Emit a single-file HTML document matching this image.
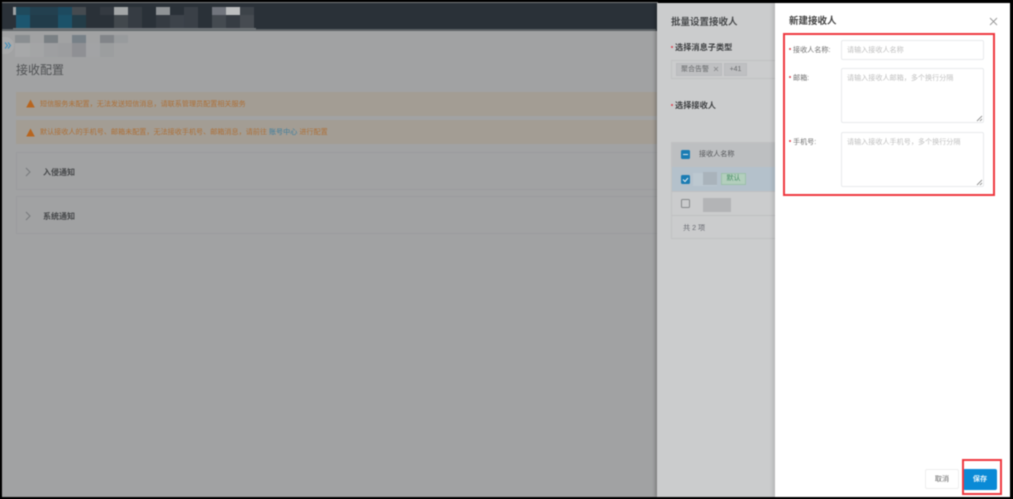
<!DOCTYPE html>
<html lang="zh">
<head>
<meta charset="utf-8">
<style>
html,body{margin:0;padding:0;background:#000;}
body{width:1013px;height:499px;overflow:hidden;position:relative;font-family:"Liberation Sans","Noto Sans CJK SC",sans-serif;}
.a{position:absolute;box-sizing:border-box;white-space:nowrap;}
#stage{position:absolute;left:0;top:0;width:1013px;height:499px;background:#000;overflow:hidden;filter:blur(.45px);}
.req{position:absolute;width:2px;height:2px;border-radius:50%;background:#d9434e;}
</style>
</head>
<body>
<div id="stage">
  <!-- backdrop page -->
  <div class="a" style="left:2px;top:2px;width:656px;height:495px;background:#a1a2a3;"></div>
  <div class="a" style="left:2px;top:2px;width:656px;height:1px;background:#77797b;"></div>
  <div class="a" style="left:2px;top:3px;width:656px;height:28px;background:#2a3138;"></div>
  <div class="a" style="left:2px;top:29px;width:654px;height:2px;background:#5d6265;"></div>

  <!-- header mosaic -->
  <div class="a" style="left:13px;top:7px;width:3px;height:8px;background:#9da1a3;"></div>
  <div class="a" style="left:16px;top:7px;width:14px;height:8px;background:#1f4a5c;"></div>
  <div class="a" style="left:16px;top:15px;width:14px;height:14px;background:#1c566f;"></div>
  <div class="a" style="left:30px;top:7px;width:28px;height:8px;background:#23404f;"></div>
  <div class="a" style="left:30px;top:15px;width:28px;height:14px;background:#213c4a;"></div>
  <div class="a" style="left:58px;top:7px;width:14px;height:8px;background:#1d4a5f;"></div>
  <div class="a" style="left:58px;top:15px;width:14px;height:14px;background:#1c5269;"></div>
  <div class="a" style="left:72px;top:7px;width:14px;height:8px;background:#454b50;"></div>
  <div class="a" style="left:72px;top:15px;width:14px;height:14px;background:#233c47;"></div>
  <div class="a" style="left:100px;top:7px;width:14px;height:8px;background:#343a41;"></div>
  <div class="a" style="left:114px;top:7px;width:14px;height:8px;background:#a3a6a7;"></div>
  <div class="a" style="left:114px;top:15px;width:14px;height:14px;background:#42484d;"></div>
  <div class="a" style="left:128px;top:7px;width:14px;height:22px;background:#363c43;"></div>
  <div class="a" style="left:156px;top:7px;width:14px;height:8px;background:#8f9396;"></div>
  <div class="a" style="left:156px;top:15px;width:14px;height:14px;background:#353b42;"></div>
  <div class="a" style="left:170px;top:15px;width:14px;height:14px;background:#3d434a;"></div>
  <div class="a" style="left:184px;top:7px;width:14px;height:22px;background:#3a4047;"></div>
  <div class="a" style="left:212px;top:7px;width:14px;height:8px;background:#71757d;"></div>
  <div class="a" style="left:212px;top:15px;width:14px;height:14px;background:#444a50;"></div>
  <div class="a" style="left:226px;top:7px;width:14px;height:8px;background:#bcbebf;"></div>
  <div class="a" style="left:226px;top:15px;width:14px;height:14px;background:#363c43;"></div>
  <div class="a" style="left:240px;top:7px;width:14px;height:8px;background:#3d4349;"></div>
  <div class="a" style="left:240px;top:15px;width:14px;height:14px;background:#464b51;"></div>
  <div class="a" style="left:13px;top:28px;width:243px;height:2px;background:#6d7276;"></div>

  <!-- breadcrumb mosaic -->
  <div class="a" style="left:15px;top:35px;width:15px;height:8px;background:#8a8e91;"></div>
  <div class="a" style="left:44px;top:35px;width:14px;height:8px;background:#7a8084;"></div>
  <div class="a" style="left:72px;top:35px;width:14px;height:8px;background:#788188;"></div>
  <div class="a" style="left:100px;top:35px;width:14px;height:8px;background:#828589;"></div>
  <div class="a" style="left:114px;top:35px;width:14px;height:8px;background:#989b9d;"></div>
  <div class="a" style="left:15px;top:43px;width:15px;height:14px;background:#a7a8a9;"></div>
  <div class="a" style="left:30px;top:43px;width:14px;height:14px;background:#a4a5a6;"></div>
  <div class="a" style="left:44px;top:43px;width:14px;height:14px;background:#9e9fa1;"></div>
  <div class="a" style="left:58px;top:43px;width:14px;height:14px;background:#9c9d9f;"></div>
  <div class="a" style="left:72px;top:43px;width:14px;height:14px;background:#8f9094;"></div>
  <div class="a" style="left:86px;top:43px;width:14px;height:14px;background:#a2a3a5;"></div>
  <div class="a" style="left:100px;top:43px;width:14px;height:14px;background:#9c9e9f;"></div>

  <!-- sidebar toggle -->
  <div class="a" style="left:2px;top:37px;width:12px;height:17px;border-radius:0 9px 9px 0;background:#a8a9aa;"></div>
  <svg class="a" style="left:4px;top:42px;" width="8" height="7" viewBox="0 0 8 7"><path d="M1 .5 3.500 3.500 1 6.500M4 .5 6.500 3.500 4 6.500" fill="none" stroke="#3f8fbb" stroke-width="1.100"/></svg>

  <div class="a" style="left:16px;top:61px;font-size:12px;line-height:18px;color:#505254;">接收配置</div>

  <!-- alerts -->
  <div class="a" style="left:16px;top:92px;width:642px;height:24px;background:#a39d94;"></div>
  <div class="a" style="left:16px;top:120px;width:642px;height:24px;background:#a39d94;"></div>
  <svg class="a" style="left:26px;top:99px;" width="9" height="9" viewBox="0 0 9 9"><path d="M4.500.5 8.800 8.500H.2Z" fill="#b8651e"/></svg>
  <svg class="a" style="left:26px;top:128px;" width="9" height="9" viewBox="0 0 9 9"><path d="M4.500.5 8.800 8.500H.2Z" fill="#b8651e"/></svg>
  <div class="a" style="left:40px;top:98px;font-size:7.100px;line-height:12px;color:#ad7038;">短信服务未配置，无法发送短信消息，请联系管理员配置相关服务</div>
  <div class="a" style="left:40px;top:126px;font-size:7.100px;line-height:12px;color:#ad7038;">默认接收人的手机号、邮箱未配置，无法接收手机号、邮箱消息，请前往 <span style="color:#3f7d9c;">账号中心</span> 进行配置</div>

  <!-- collapse cards -->
  <div class="a" style="left:16px;top:152px;width:642px;height:38px;border:1px solid #9b9c9e;border-right:0;background:#a1a2a3;"></div>
  <div class="a" style="left:16px;top:196px;width:642px;height:38px;border:1px solid #9b9c9e;border-right:0;background:#a1a2a3;"></div>
  <svg class="a" style="left:25px;top:167px;" width="6" height="10" viewBox="0 0 6 10"><path d="M1 1 5 5 1 9" fill="none" stroke="#777a7c" stroke-width="1"/></svg>
  <svg class="a" style="left:25px;top:211px;" width="6" height="10" viewBox="0 0 6 10"><path d="M1 1 5 5 1 9" fill="none" stroke="#777a7c" stroke-width="1"/></svg>
  <div class="a" style="left:43px;top:167px;font-size:8px;line-height:12px;font-weight:700;color:#46484a;">入侵通知</div>
  <div class="a" style="left:43px;top:211px;font-size:8px;line-height:12px;font-weight:700;color:#46484a;">系统通知</div>

  <!-- middle drawer -->
  <div class="a" style="left:657px;top:3px;width:119px;height:494px;background:#cbcccd;box-shadow:-2px 0 3px rgba(0,0,0,.22);"></div>
  <div class="a" style="left:671px;top:16px;font-size:9.500px;line-height:13px;font-weight:700;color:#47494b;">批量设置接收人</div>
  <i class="req" style="left:671px;top:46px;"></i>
  <div class="a" style="left:675px;top:42px;font-size:8.200px;line-height:12px;font-weight:700;color:#3f4143;">选择消息子类型</div>
  <div class="a" style="left:671px;top:60px;width:105px;height:19px;border:1px solid #c0c1c2;border-right:0;"></div>
  <div class="a" style="left:676px;top:63px;width:46px;height:13px;background:#bfc0c2;border:1px solid #babbbd;font-size:7px;line-height:11px;color:#66686a;padding-left:4px;">聚合告警</div>
  <svg class="a" style="left:713px;top:66px;" width="6" height="6" viewBox="0 0 6 6"><path d="M1 1 5 5M5 1 1 5" fill="none" stroke="#7f8183" stroke-width=".7"/></svg>
  <div class="a" style="left:724px;top:63px;width:23px;height:13px;background:#bfc0c2;border:1px solid #babbbd;font-size:7px;line-height:11px;color:#66686a;text-align:center;">+41</div>
  <i class="req" style="left:671px;top:104px;"></i>
  <div class="a" style="left:675px;top:100px;font-size:8.200px;line-height:12px;font-weight:700;color:#3f4143;">选择接收人</div>

  <!-- table -->
  <div class="a" style="left:671px;top:142px;width:105px;height:97px;border:1px solid #c0c1c2;border-right:0;"></div>
  <div class="a" style="left:672px;top:143px;width:104px;height:24px;background:#bdbfc1;"></div>
  <div class="a" style="left:672px;top:167px;width:104px;height:24px;background:#b4c1cb;"></div>
  <div class="a" style="left:672px;top:191px;width:104px;height:1px;background:#bfc0c1;"></div>
  <div class="a" style="left:672px;top:215px;width:104px;height:1px;background:#bfc0c1;"></div>
  <div class="a" style="left:681px;top:150px;width:9px;height:9px;border-radius:1.500px;background:#1a7cb3;"></div>
  <div class="a" style="left:683px;top:154px;width:5px;height:1px;background:#dfe8ee;"></div>
  <div class="a" style="left:699px;top:148px;font-size:7.100px;line-height:12px;color:#55575a;">接收人名称</div>
  <div class="a" style="left:681px;top:175px;width:9px;height:9px;border-radius:1.500px;background:#1a7cb3;"></div>
  <svg class="a" style="left:681px;top:175px;" width="9" height="9" viewBox="0 0 9 9"><path d="M2 4.500 4 6.500 7 3" fill="none" stroke="#e8eef2" stroke-width="1"/></svg>
  <div class="a" style="left:693px;top:173px;width:24px;height:13px;background:#bcc8d0;"></div>
  <div class="a" style="left:703px;top:172px;width:14px;height:13px;background:#a9b3bb;"></div>
  <div class="a" style="left:721px;top:173px;width:25px;height:12px;background:#b3cfbd;border:1px solid #9cc0aa;font-size:7px;line-height:10px;color:#4a8f68;text-align:center;">默认</div>
  <div class="a" style="left:681px;top:199px;width:9px;height:9px;border-radius:1.500px;border:1px solid #87898b;background:#cbcccd;"></div>
  <div class="a" style="left:703px;top:198px;width:28px;height:14px;background:#b3b4b6;"></div>
  <div class="a" style="left:683px;top:222px;font-size:7.100px;line-height:12px;color:#666870;">共 2 项</div>

  <!-- front drawer -->
  <div class="a" style="left:775px;top:3px;width:235px;height:494px;background:#fff;box-shadow:-2px 0 4px rgba(0,0,0,.12);"></div>
  <div class="a" style="left:789px;top:15px;font-size:9.500px;line-height:13px;font-weight:700;color:#444;">新建接收人</div>
  <svg class="a" style="left:989px;top:17px;" width="9" height="9" viewBox="0 0 9 9"><path d="M1 1 8 8M8 1 1 8" fill="none" stroke="#999" stroke-width=".9"/></svg>

  <!-- form -->
  <i class="req" style="left:789px;top:48px;"></i>
  <div class="a" style="left:793px;top:44px;font-size:7.100px;line-height:12px;color:#707070;">接收人名称:</div>
  <div class="a" style="left:841px;top:40px;width:143px;height:20px;border:1px solid #e8eaec;border-radius:2px;font-size:7.100px;line-height:18px;color:#c0c0c0;padding-left:5px;">请输入接收人名称</div>
  <i class="req" style="left:789px;top:76px;"></i>
  <div class="a" style="left:793px;top:72px;font-size:7.100px;line-height:12px;color:#707070;">邮箱:</div>
  <div class="a" style="left:841px;top:68px;width:143px;height:55px;border:1px solid #e8eaec;border-radius:2px;font-size:7.100px;line-height:18px;color:#c0c0c0;padding-left:5px;">请输入接收人邮箱，多个换行分隔</div>
  <svg class="a" style="left:976px;top:115px;" width="7" height="7" viewBox="0 0 7 7"><path d="M1 6 6 1M4 6 6 4" fill="none" stroke="#777" stroke-width=".8"/></svg>
  <i class="req" style="left:789px;top:140px;"></i>
  <div class="a" style="left:793px;top:136px;font-size:7.100px;line-height:12px;color:#707070;">手机号:</div>
  <div class="a" style="left:841px;top:132px;width:143px;height:55px;border:1px solid #e8eaec;border-radius:2px;font-size:7.100px;line-height:18px;color:#c0c0c0;padding-left:5px;">请输入接收人手机号，多个换行分隔</div>
  <svg class="a" style="left:976px;top:179px;" width="7" height="7" viewBox="0 0 7 7"><path d="M1 6 6 1M4 6 6 4" fill="none" stroke="#777" stroke-width=".8"/></svg>

  <!-- red annotation -->
  <div class="a" style="left:783px;top:33px;width:212px;height:163px;border:2px solid #ee3840;"></div>

  <!-- footer buttons -->
  <div class="a" style="left:925px;top:469px;width:34px;height:20px;border:1px solid #eee;border-radius:2px;background:#fff;font-size:7.100px;line-height:18px;color:#666;text-align:center;">取消</div>
  <div class="a" style="left:963px;top:469px;width:34px;height:21px;border-radius:2px;background:#0a8ad6;font-size:7.100px;line-height:20px;color:#e8f4fb;text-align:center;font-weight:700;">保存</div>
  <div class="a" style="left:962px;top:459px;width:40px;height:36px;border:2px solid #ee3840;"></div>
</div>
</body>
</html>
